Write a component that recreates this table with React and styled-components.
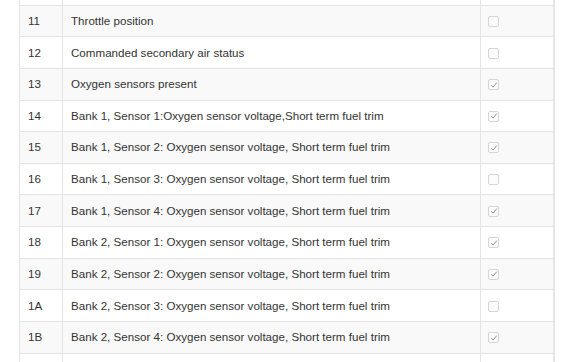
import React from "react"
import styled, { createGlobalStyle } from "styled-components"

const GlobalStyle = createGlobalStyle`
  html, body {
    margin: 0;
    padding: 0;
    background: #fff;
  }
  body {
    font-family: "Liberation Sans", Arial, Helvetica, sans-serif;
    color: #333;
  }
`

// first and last rows are only partly scrolled into view
const pids = [
  { id: "", name: "", on: false },
  { id: "11", name: "Throttle position", on: false },
  { id: "12", name: "Commanded secondary air status", on: false },
  { id: "13", name: "Oxygen sensors present", on: true },
  { id: "14", name: "Bank 1, Sensor 1:Oxygen sensor voltage,Short term fuel trim", on: true },
  { id: "15", name: "Bank 1, Sensor 2: Oxygen sensor voltage, Short term fuel trim", on: true },
  { id: "16", name: "Bank 1, Sensor 3: Oxygen sensor voltage, Short term fuel trim", on: false },
  { id: "17", name: "Bank 1, Sensor 4: Oxygen sensor voltage, Short term fuel trim", on: true },
  { id: "18", name: "Bank 2, Sensor 1: Oxygen sensor voltage, Short term fuel trim", on: true },
  { id: "19", name: "Bank 2, Sensor 2: Oxygen sensor voltage, Short term fuel trim", on: true },
  { id: "1A", name: "Bank 2, Sensor 3: Oxygen sensor voltage, Short term fuel trim", on: false },
  { id: "1B", name: "Bank 2, Sensor 4: Oxygen sensor voltage, Short term fuel trim", on: true },
  { id: "", name: "", on: false },
]

const Viewport = styled.div`
  height: 362px;
  overflow: hidden;
  padding-left: 19px;
  width: 540px;
`

const Table = styled.table`
  width: 534px;
  table-layout: fixed;
  border-collapse: collapse;
  margin-top: -27px;
  font-size: 11.6px;
  border-right: 2px solid #e6e6e6;
`

const Row = styled.tr`
  background: ${(p) => (p.$striped ? "#f9f9f9" : "#fff")};
`

const Cell = styled.td`
  height: 30.64px;
  padding: 0 8px;
  border: 1px solid #e4e4e4;
  vertical-align: middle;
  line-height: 16px;
  white-space: nowrap;
  overflow: hidden;
`

const CheckCell = styled(Cell)`
  padding-left: 7px;
`

const Box = styled.span`
  display: ${(p) => (p.$hidden ? "none" : "flex")};
  align-items: center;
  justify-content: center;
  width: 9px;
  height: 9px;
  border: 1px solid #d6d6d6;
  border-radius: 2px;
  background: #fbfbfb;
  margin-top: 1px;
`

const Check = ({ on, hidden }) => (
  <Box $hidden={hidden}>
    {on && (
      <svg width="8" height="8" viewBox="0 0 8 8">
        <path d="M1.3 4.3 L3.1 6.1 L6.8 1.6" fill="none" stroke="#8f8f8f" strokeWidth="1" />
      </svg>
    )}
  </Box>
)

export default function App() {
  return (
    <>
      <GlobalStyle />
      <Viewport>
        <Table>
          <colgroup>
            <col style={{ width: 43 }} />
            <col style={{ width: 418 }} />
            <col style={{ width: 73 }} />
          </colgroup>
          <tbody>
            {pids.map((pid, i) => (
              <Row key={i} $striped={i % 2 === 1}>
                <Cell>{pid.id}</Cell>
                <Cell>{pid.name}</Cell>
                <CheckCell>
                  <Check on={pid.on} hidden={!pid.id} />
                </CheckCell>
              </Row>
            ))}
          </tbody>
        </Table>
      </Viewport>
    </>
  )
}
